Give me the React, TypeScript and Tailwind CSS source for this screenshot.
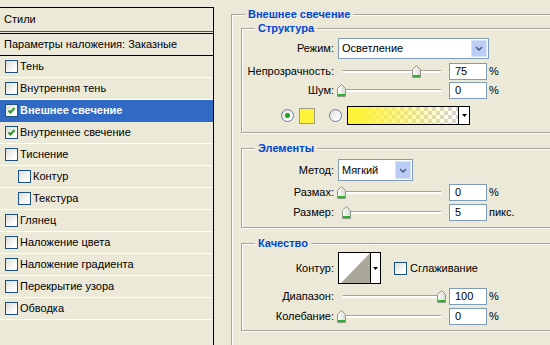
import React from "react";

const layers = [
  { label: "Тень" },
  { label: "Внутренняя тень" },
  { label: "Внешнее свечение", checked: true, active: true },
  { label: "Внутреннее свечение", checked: true },
  { label: "Тиснение" },
  { label: "Контур", sub: true },
  { label: "Текстура", sub: true },
  { label: "Глянец" },
  { label: "Наложение цвета" },
  { label: "Наложение градиента" },
  { label: "Перекрытие узора" },
  { label: "Обводка" },
];

function CheckBox({ checked }: { checked?: boolean }) {
  return (
    <span className="flex h-[13px] w-[13px] shrink-0 items-center justify-center border border-[#1c5180] bg-[linear-gradient(135deg,#dcdcd5,#ffffff_80%)]">
      {checked && (
        <svg width="9" height="9" viewBox="0 0 9 9">
          <path d="M1.5 4.5 L3.5 6.5 L7.5 2" fill="none" stroke="#21a121" strokeWidth="2" />
        </svg>
      )}
    </span>
  );
}

function Radio({ checked }: { checked?: boolean }) {
  return (
    <span className="flex h-[13px] w-[13px] shrink-0 items-center justify-center rounded-full border border-[#6b7d94] bg-[linear-gradient(135deg,#dcdcd5,#ffffff_80%)]">
      {checked && <span className="h-[5px] w-[5px] rounded-full bg-[#21a121]" />}
    </span>
  );
}

function DownArrow() {
  return (
    <svg width="5" height="3" viewBox="0 0 5 3">
      <path d="M0 0 H5 L2.5 3 Z" fill="#000" />
    </svg>
  );
}

function Select({ value, width }: { value: string; width: string }) {
  return (
    <div className={`ml-[4px] flex h-full items-center border border-[#7f9db9] bg-white ${width}`}>
      <span className="flex-1 pl-[3px]">{value}</span>
      <span className="mr-px flex h-[calc(100%-2px)] w-[16px] items-center justify-center border border-[#d6e0f8] bg-[#bccdf5]">
        <svg width="8" height="5" viewBox="0 0 8 5">
          <path d="M1 1 L4 4 L7 1" fill="none" stroke="#4d6185" strokeWidth="1.6" />
        </svg>
      </span>
    </div>
  );
}

function Thumb() {
  return (
    <svg width="9" height="13" viewBox="0 0 9 13">
      <defs>
        <linearGradient id="thumbFill" x1="0" x2="1">
          <stop offset="0" stopColor="#ffffff" />
          <stop offset="1" stopColor="#d8d8d0" />
        </linearGradient>
      </defs>
      <path d="M0.5 4.5 L4.5 0.5 L8.5 4.5 V12.5 H0.5 Z" fill="url(#thumbFill)" stroke="#8f9a8c" />
      <rect x="1" y="10" width="7" height="2" fill="#2fae2f" />
    </svg>
  );
}

function SliderRow({ label, value, pct, unit, className }: { label: string; value: string; pct: number; unit: string; className: string }) {
  return (
    <div className={`flex h-[17px] items-center ${className}`}>
      <span className="w-[92px] text-right">{label}</span>
      <div className="relative ml-[3px] h-full w-[109px] px-[5px] pt-[7px]">
        <div className="h-[3px] rounded-l-full border-t border-[#a5a597] bg-white" />
        <div className="absolute top-[2px]" style={{ left: `${pct}px` }}>
          <Thumb />
        </div>
      </div>
      <div className="ml-[3px] flex h-full w-[38px] items-center border border-[#7f9db9] bg-white pl-[5px]">{value}</div>
      <span className="ml-[2px]">{unit}</span>
    </div>
  );
}

function Group({ title, className, children }: { title: string; className?: string; children: React.ReactNode }) {
  return (
    <fieldset className={`border border-[#a7a597] shadow-[inset_1px_1px_0_#fff,1px_1px_0_#fff] ${className ?? ""}`}>
      <legend className="ml-[13px] bg-[#ece9d8] px-[3px] text-[11px] font-bold leading-[13px] text-[#0046d5]">{title}</legend>
      {children}
    </fieldset>
  );
}

export default function App() {
  return (
    <div className="flex h-[345px] w-[550px] overflow-hidden bg-[#ece9d8] font-['Liberation_Sans',Arial,sans-serif] text-[11px] leading-[13px] text-black">
      {/* Styles list */}
      <div className="mt-[7px] flex w-[214px] shrink-0 flex-col border-t border-r border-black">
        <div className="flex h-[24px] items-center border-b border-[#55554f] pl-[4px]">Стили</div>
        <div className="mt-px flex h-[23px] items-center border-y border-black pl-[4px]">Параметры наложения: Заказные</div>
        {layers.map((l) => (
          <div
            key={l.label}
            className={`flex h-[22px] items-center gap-[2px] border-b ${
              l.active ? "border-[#316ac5] bg-[#316ac5] font-bold text-white" : "border-white"
            } ${l.sub ? "pl-[18px]" : "pl-[5px]"}`}
          >
            <CheckBox checked={l.checked} />
            <span>{l.label}</span>
          </div>
        ))}
        <div className="flex-1" />
      </div>

      {/* Outer glow settings */}
      <div className="flex-1 pl-[17px] pt-[8px]">
        <Group title="Внешнее свечение" className="h-[360px] w-[340px]">
          <Group title="Структура" className="ml-[9px] mt-px w-[320px] pb-[7px]">
            <div className="mt-[3px] flex h-[21px] items-center">
              <span className="w-[92px] text-right">Режим:</span>
              <Select value="Осветление" width="w-[151px]" />
            </div>
            <SliderRow label="Непрозрачность:" value="75" pct={75} unit="%" className="mt-[4px]" />
            <SliderRow label="Шум:" value="0" pct={0} unit="%" className="mt-[2px]" />
            <div className="mt-[7px] flex h-[19px] items-center pl-[39px]">
              <Radio checked />
              <span className="ml-[5px] h-[16px] w-[16px] border border-[#a09e84] bg-[#fff23a]" />
              <span className="ml-[14px]">
                <Radio />
              </span>
              <div className="ml-[5px] flex h-full w-[123px] border border-black">
                <div className="flex-1 bg-[linear-gradient(to_right,#fff23a_10%,rgba(255,242,58,0)),repeating-conic-gradient(#d4d4d4_0%_25%,#ffffff_0%_50%)] [background-size:100%_100%,8px_8px]" />
                <div className="flex w-[11px] items-center justify-center border-l border-black bg-white">
                  <DownArrow />
                </div>
              </div>
            </div>
          </Group>

          <Group title="Элементы" className="ml-[9px] mt-[9px] w-[320px] pb-[6px]">
            <div className="mt-[4px] flex h-[22px] items-center">
              <span className="w-[92px] text-right">Метод:</span>
              <Select value="Мягкий" width="w-[75px]" />
            </div>
            <SliderRow label="Размах:" value="0" pct={0} unit="%" className="mt-[3px]" />
            <SliderRow label="Размер:" value="5" pct={5} unit="пикс." className="mt-[3px]" />
          </Group>

          <Group title="Качество" className="ml-[9px] mt-[9px] w-[320px] pb-[5px]">
            <div className="mt-[2px] flex h-[32px] items-center">
              <span className="w-[92px] text-right">Контур:</span>
              <div className="ml-[4px] flex h-full w-[43px] border border-black bg-white">
                <svg width="31" height="30" viewBox="0 0 31 30" className="shrink-0">
                  <polygon points="2,30 31,0 31,30" fill="#aca899" />
                </svg>
                <div className="flex flex-1 items-center justify-center border-l border-black">
                  <DownArrow />
                </div>
              </div>
              <span className="ml-[13px]">
                <CheckBox />
              </span>
              <span className="ml-[3px]">Сглаживание</span>
            </div>
            <SliderRow label="Диапазон:" value="100" pct={100} unit="%" className="mt-[4px]" />
            <SliderRow label="Колебание:" value="0" pct={0} unit="%" className="mt-[3px]" />
          </Group>
        </Group>
      </div>
    </div>
  );
}
